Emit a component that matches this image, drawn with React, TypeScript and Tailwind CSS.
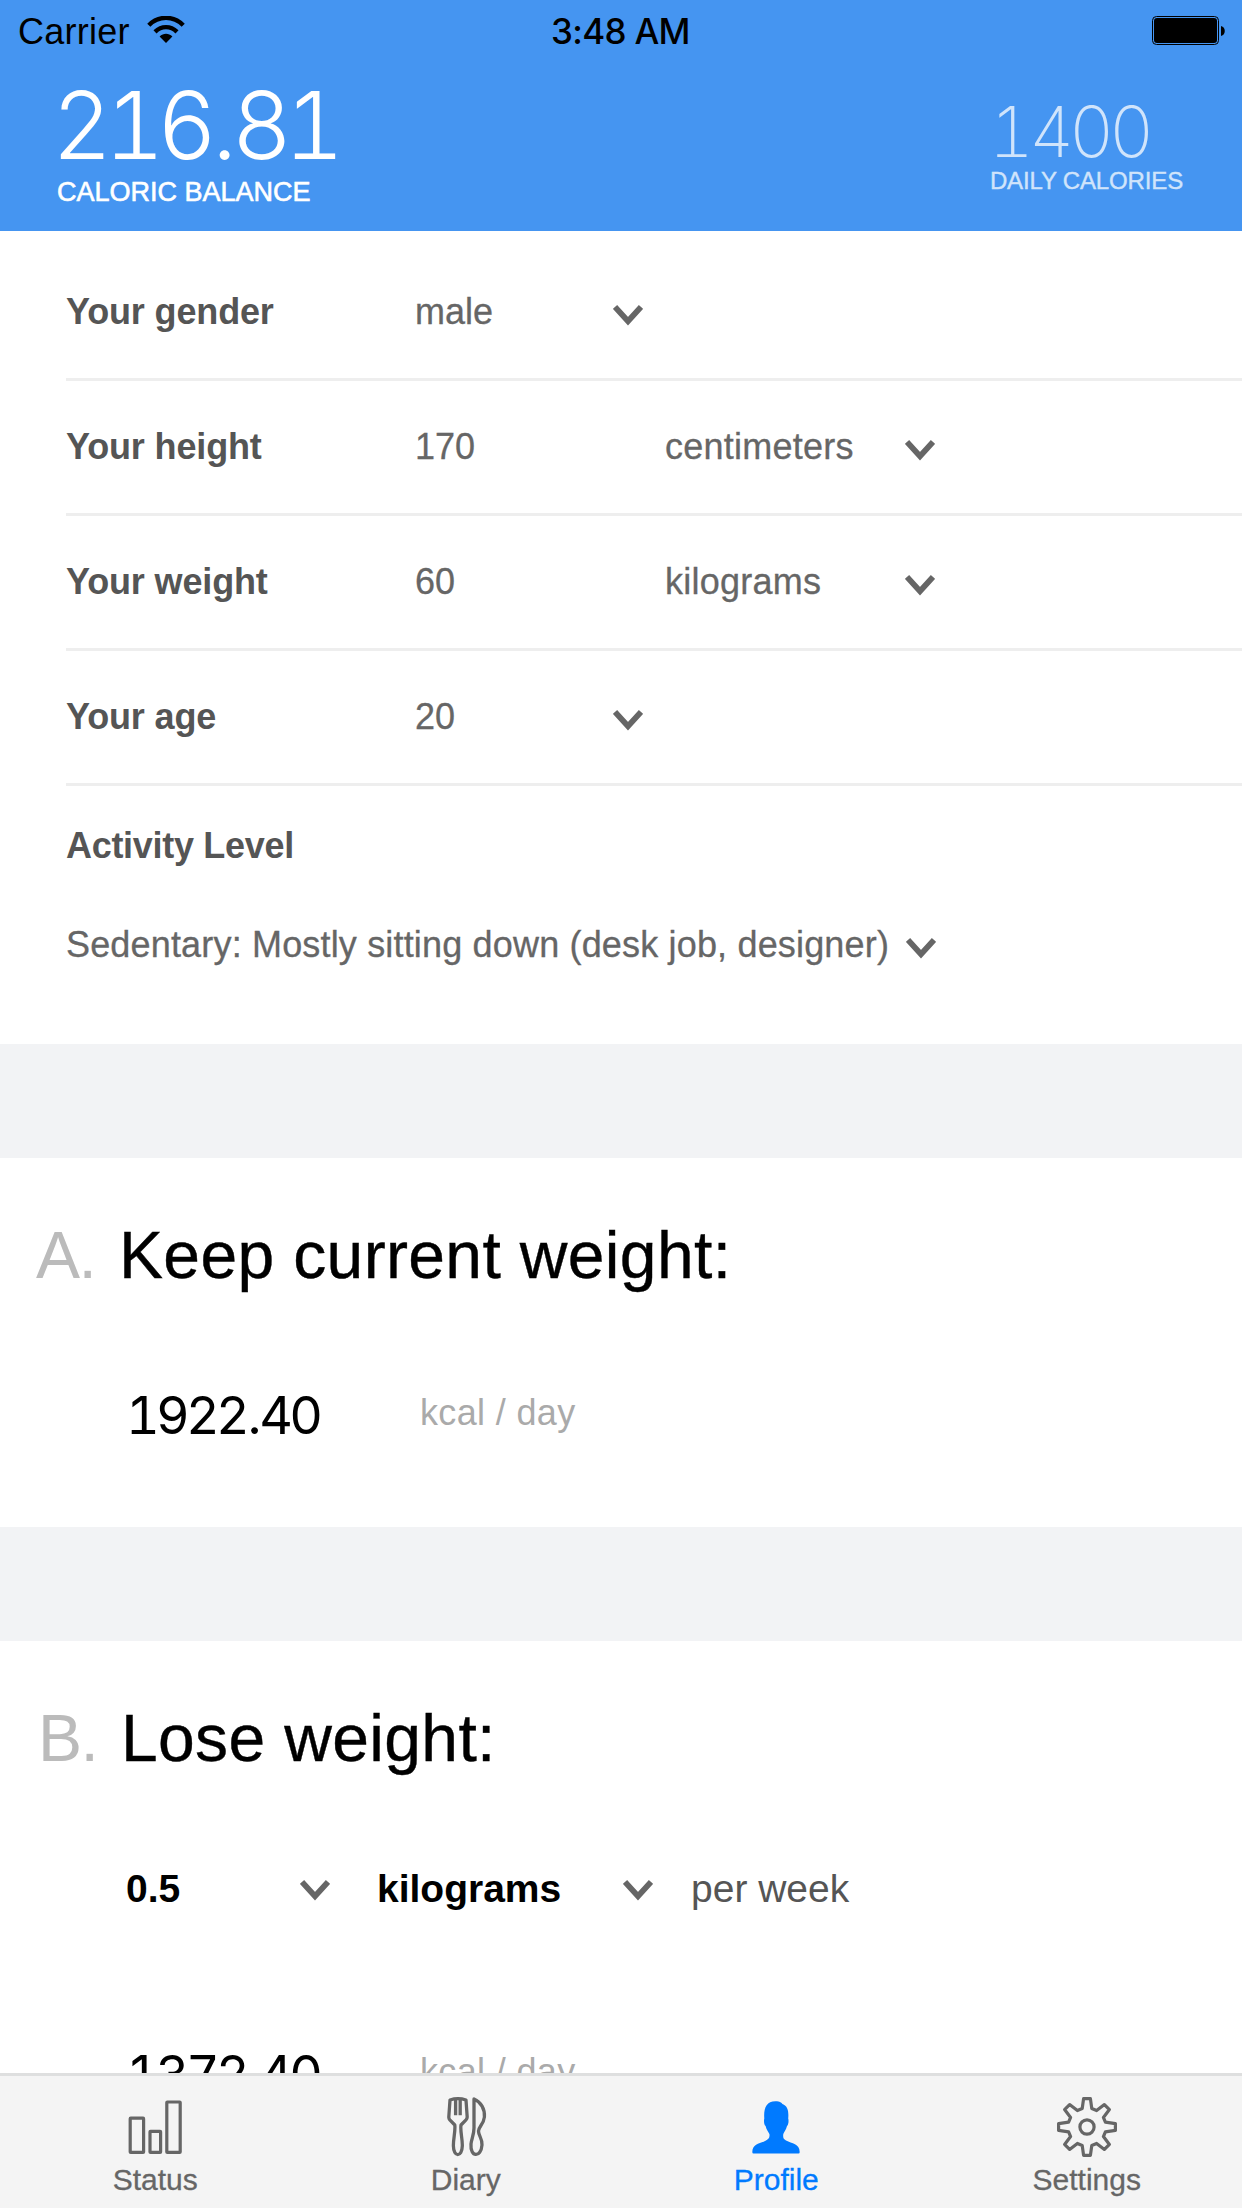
import React from "react";

type IconProps = { className?: string };

function Chevron({ className = "" }: IconProps) {
  return (
    <svg className={`block h-[21px] w-[30px] shrink-0 ${className}`} viewBox="0 0 30 21" fill="none">
      <path d="M2 2 L15 16.2 L28 2" stroke="#666" strokeWidth="5.8" />
    </svg>
  );
}

function Wifi() {
  return (
    <svg className="ml-[17px] block h-[28px] w-[38px]" viewBox="0 0 38 28" fill="none">
      <path d="M1.8 9.2 C11.5 -0.6 26.5 -0.6 36.2 9.2" stroke="#000" strokeWidth="4.4" />
      <path d="M8 15.8 C14.5 9.6 23.5 9.6 30 15.8" stroke="#000" strokeWidth="4.4" />
      <path d="M12.6 20.4 C16.4 17 21.6 17 25.4 20.4 L19 27 Z" fill="#000" />
    </svg>
  );
}

function Battery() {
  return (
    <svg className="block h-[30px] w-[74px]" viewBox="0 0 74 30">
      <rect x="0.5" y="0.5" width="66" height="28" rx="4" fill="none" stroke="#000" />
      <rect x="2" y="2" width="63" height="25" rx="3" fill="#000" />
      <path d="M69 10 C74 11 74 19 69 20 Z" fill="#000" />
    </svg>
  );
}

function StatusIcon() {
  return (
    <svg className="block h-[60px] w-[60px]" viewBox="0 0 60 60" fill="none" stroke="#666" strokeWidth="3.2" strokeLinejoin="round">
      <rect x="5.2" y="21.2" width="13.4" height="34.2" rx="0.5" />
      <rect x="25" y="34.3" width="10.6" height="21.1" rx="0.5" />
      <rect x="41.8" y="5" width="13.4" height="50.4" rx="0.5" />
    </svg>
  );
}

function DiaryIcon() {
  return (
    <svg className="block h-[60px] w-[60px]" viewBox="-1 0 60 60" fill="none" stroke="#666" strokeWidth="3.3" strokeLinejoin="round">
      <path d="M13 3 C18 1.4 24 1.4 29 3 L30.2 20 Q30.2 21.6 29 22.8 L24 28 C23 34 25.6 42 25.3 49 C25 60.5 16.6 60.5 16.4 49 C16.2 42 18.6 34 17.8 28 L12.8 22.8 Q11.7 21.6 11.8 20 Z" />
      <path d="M18.6 3 V18.2 M23.2 3 V18.2" />
      <path d="M37 2 C44 5 48 12 47.4 20 C46.8 27 41.5 30 41.5 34 C41.5 39 45.4 41 45 48 C44 61 33 60.5 34 47 C34.4 42 37 38 37 31 Z" />
    </svg>
  );
}

function ProfileIcon() {
  return (
    <svg className="block h-[60px] w-[60px]" viewBox="0 0 60 60" fill="#007aff">
      <path d="M29.5 4.3 C34 4.3 35.5 5.8 36.4 7.1 C42 9 42.8 15 42.2 21.5 C42.8 23 42.7 27.5 41 29 C40 33 38 35 37.3 37 C36.8 41 37.5 42 40 43.6 C46 47 53.5 46.5 53.7 55 Q53.7 56.5 52.5 56.5 H7.5 Q6.3 56.5 6.3 55 C6.5 46.5 14 47 20 43.6 C22.5 42 24 41 23.4 37 C22.5 35 20.5 33 19.6 29 C17.8 27.5 17.8 23 18.3 21.5 C17.5 12 20 4.3 29.5 4.3 Z" />
    </svg>
  );
}

function SettingsIcon() {
  return (
    <svg className="block h-[60px] w-[60px]" viewBox="-30 -30 60 60" fill="none" stroke="#666" strokeWidth="3.2" strokeLinejoin="round">
      <path d="M-4.8 -18.4 L-3.4 -28.4 H3.4 L4.8 -18.4 L9.6 -16.4 L17.4 -22.4 L22.4 -17.4 L16.4 -9.6 L18.4 -4.8 L28.4 -3.4 V3.4 L18.4 4.8 L16.4 9.6 L22.4 17.4 L17.4 22.4 L9.6 16.4 L4.8 18.4 L3.4 28.4 H-3.4 L-4.8 18.4 L-9.6 16.4 L-17.4 22.4 L-22.4 17.4 L-16.4 9.6 L-18.4 4.8 L-28.4 3.4 V-3.4 L-18.4 -4.8 L-16.4 -9.6 L-22.4 -17.4 L-17.4 -22.4 L-9.6 -16.4 Z" />
      <circle r="7.1" />
    </svg>
  );
}

function Field({ label, value, unit, select }: { label: string; value: string; unit?: string; select?: boolean }) {
  return (
    <div className="ml-[66px] flex h-[135px] items-start border-b-[3px] border-[#eeeeee] pt-[46px] text-[36px] leading-[40px] text-[#666]">
      <span className="w-[349px] font-bold tracking-[-0.15px] text-[#555]">{label}</span>
      <span className="w-[198px] [-webkit-text-stroke:0.3px_#666]">{value}</span>
      {select && <Chevron className="mt-[13px]" />}
      {unit && (
        <>
          <span className="ml-[52px] w-[240px] tracking-[0.25px] [-webkit-text-stroke:0.3px_#666]">{unit}</span>
          <Chevron className="mt-[13px]" />
        </>
      )}
    </div>
  );
}

function Goal({ letter, title }: { letter: string; title: string }) {
  return (
    <h2 className="flex pt-[62px] text-[66px] leading-[70px] text-black">
      <span className="w-[83px] tracking-[-1.5px] text-[#bbb]">{letter}</span>
      <span className="tracking-[0.35px] [-webkit-text-stroke:0.4px_black]">{title}</span>
    </h2>
  );
}

function Calories({ value }: { value: string }) {
  const [whole, fraction] = value.split(".");
  return (
    <div className="flex items-start pl-[126px]">
      <span className="mt-px w-[294px] font-[Inter,sans-serif] text-[52px] leading-[60px] tracking-[-3.7px] text-black tabular-nums">
        {whole}<span className="mx-[1.5px]">.</span>{fraction}
      </span>
      <span className="mt-[8px] text-[36px] leading-[40px] tracking-[0.35px] text-[#aaa]">kcal / day</span>
    </div>
  );
}

function Tab({ label, icon, active }: { label: string; icon: React.ReactNode; active?: boolean }) {
  return (
    <a className={`flex flex-1 flex-col items-center pt-[21px] ${active ? "text-[#007aff]" : "text-[#666]"}`}>
      {icon}
      <span className="mt-[5px] text-[30px] leading-[36px] [-webkit-text-stroke:0.3px_currentColor]">{label}</span>
    </a>
  );
}

export default function App() {
  return (
    <div className="flex h-[2208px] w-[1242px] flex-col overflow-hidden bg-white font-['Liberation_Sans',Arial,sans-serif]">
      <header className="h-[231px] shrink-0 bg-[#4595f1]">
        <div className="grid h-[62px] grid-cols-3 items-start pt-[12px] pr-[16px] pl-[18px]">
          <div className="flex items-start">
            <span className="text-[36px] leading-[40px] tracking-[0.25px]">Carrier</span>
            <div className="mt-[4px]"><Wifi /></div>
          </div>
          <div className="pr-[3px] text-center font-[Inter,sans-serif] text-[35px] leading-[38px] font-medium tracking-[-0.7px]">3:48 AM</div>
          <div className="mt-[4px] flex justify-end"><Battery /></div>
        </div>
        <div className="flex justify-between pr-[59px] pl-[57px] text-white">
          <div>
            <div className="mt-[13px] -ml-[5px] font-[Inter,sans-serif] text-[93px] leading-[100px] font-light tracking-[-7.7px] tabular-nums">
              216<span className="mx-[2.5px]">.</span>81
            </div>
            <div className="mt-[2px] text-[27px] leading-[30px] [-webkit-text-stroke:0.6px_white]">CALORIC BALANCE</div>
          </div>
          <div className="text-[#d0e4fb]">
            <div className="mt-[32px] -ml-px font-[Inter,sans-serif] text-[70px] leading-[76px] font-[240] tracking-[-5.2px] tabular-nums">1400</div>
            <div className="-mt-[3px] text-[24px] leading-[28px] tracking-[-0.15px] [-webkit-text-stroke:0.4px_#d0e4fb]">DAILY CALORIES</div>
          </div>
        </div>
      </header>

      <main className="min-h-0 flex-1 overflow-hidden">
        <section className="h-[813px] pt-[15px]">
          <Field label="Your gender" value="male" select />
          <Field label="Your height" value="170" unit="centimeters" />
          <Field label="Your weight" value="60" unit="kilograms" />
          <Field label="Your age" value="20" select />
          <div className="ml-[66px] pt-[40px] text-[36px] leading-[40px]">
            <h3 className="font-bold tracking-[-0.3px] text-[#555]">Activity Level</h3>
            <div className="mt-[59px] flex text-[#666]">
              <span className="w-[840px] tracking-[0.17px] whitespace-nowrap [-webkit-text-stroke:0.3px_#666]">Sedentary: Mostly sitting down (desk job, designer)</span>
              <Chevron className="mt-[13px]" />
            </div>
          </div>
        </section>
        <div className="h-[114px] bg-[#f2f3f5]" />
        <section className="h-[369px] pl-[36px]">
          <Goal letter="A." title="Keep current weight:" />
          <div className="-ml-[36px] mt-[95px]"><Calories value="1922.40" /></div>
        </section>
        <div className="h-[114px] bg-[#f2f3f5]" />
        <section className="pl-[38px]">
          <Goal letter="B." title="Lose weight:" />
          <div className="mt-[94px] flex pl-[88px] text-[39px] leading-[44px]">
            <span className="w-[174px] font-bold">0.5</span>
            <Chevron className="mt-[13px]" />
            <span className="ml-[47px] w-[246px] font-bold">kilograms</span>
            <Chevron className="mt-[13px]" />
            <span className="ml-[38px] text-[#555]">per week</span>
          </div>
          <div className="-ml-[38px] mt-[133px]"><Calories value="1372.40" /></div>
        </section>
      </main>

      <nav className="flex h-[135px] shrink-0 border-t-[3px] border-[#dedfdf] bg-[#f4f4f4]">
        <Tab label="Status" icon={<StatusIcon />} />
        <Tab label="Diary" icon={<DiaryIcon />} />
        <Tab label="Profile" icon={<ProfileIcon />} active />
        <Tab label="Settings" icon={<SettingsIcon />} />
      </nav>
    </div>
  );
}
